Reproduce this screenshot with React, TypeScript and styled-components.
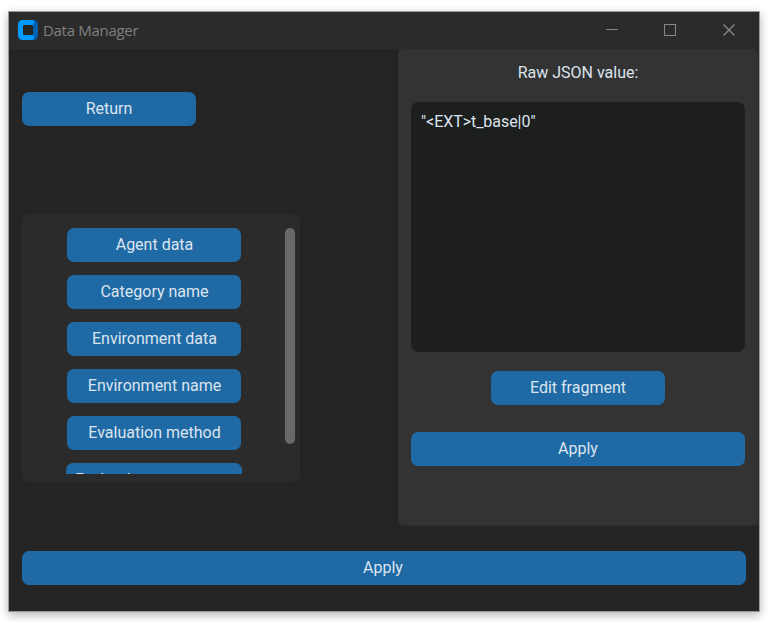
import React from "react";
import styled, { createGlobalStyle } from "styled-components";

const Global = createGlobalStyle`
  * { box-sizing: border-box; }
  body { margin: 0; background: #fff; overflow: hidden; }
`;

const Desktop = styled.div`
  width: 768px;
  height: 622px;
  padding: 11px 8px 10px;
  overflow: hidden;
`;

const Window = styled.main`
  width: 752px;
  height: 601px;
  border: 1px solid #999;
  background: #242424;
  box-shadow: 0 3px 9px rgba(0, 0, 0, 0.3);
  color: #dce4ee;
  font: 16px/20px Roboto, sans-serif;
`;

const TitleBar = styled.header`
  height: 37px;
  padding: 0 0 1px 9px;
  display: flex;
  align-items: center;
  background: #2b2b2b;
`;

const Title = styled.h1`
  flex: 1;
  margin: 0 0 0 5px;
  color: #808080;
  font: 400 15px/20px "Open Sans", "Noto Sans", sans-serif;
  letter-spacing: -0.3px;
`;

const WindowControls = styled.div`
  display: flex;
  gap: 46px;
  margin-right: 25px;

  svg { display: block; }
  svg:last-child { margin-left: 1px; margin-right: -1px; }
`;

const Content = styled.div`
  height: 477px;
  display: flex;
  justify-content: space-between;
`;

const Sidebar = styled.section`
  width: 291px;
  padding: 43px 0 0 13px;
`;

const Button = styled.button<{ $width?: number }>`
  display: block;
  flex: none;
  width: ${(p) => (p.$width ? `${p.$width}px` : "100%")};
  height: 34px;
  padding: 0;
  border: 0;
  border-radius: 7px;
  background: #1f6aa5;
  color: #dce4ee;
  font: inherit;
  text-align: center;
  white-space: nowrap;
`;

const ListFrame = styled.div`
  width: 278px;
  height: 268px;
  margin-top: 88px;
  padding: 14px 5px 8px 6px;
  display: flex;
  justify-content: space-between;
  border-radius: 8px;
  background: #2b2b2b;
`;

const ButtonList = styled.div`
  width: 252px;
  height: 246px;
  display: flex;
  flex-direction: column;
  align-items: center;
  gap: 13px;
  overflow: hidden;

  button { padding-left: 1px; }
`;

const ScrollThumb = styled.div`
  width: 10px;
  height: 216px;
  border-radius: 5px;
  background: #696969;
`;

const PanelBack = styled.div`
  width: 361px;
  background: #2b2b2b;
`;

const Panel = styled.section`
  width: 360px;
  height: 476px;
  padding: 14px 13px 0;
  display: flex;
  flex-direction: column;
  align-items: center;
  border-radius: 7px;
  background: #333;
`;

const JsonBox = styled.pre`
  width: 334px;
  height: 250px;
  margin: 19px 0;
  padding: 10px;
  border-radius: 8px;
  background: #1d1e1e;
  font: inherit;
  letter-spacing: -0.05px;
`;

const PanelAction = styled.div`
  width: 100%;
  margin-top: 27px;
`;

const Footer = styled.footer`
  padding: 25px 13px 0;

  button { padding-right: 2px; }
`;

const items = [
  { label: "Agent data", width: 174 },
  { label: "Category name", width: 174 },
  { label: "Environment data", width: 174 },
  { label: "Environment name", width: 174 },
  { label: "Evaluation method", width: 174 },
  { label: "Evaluation parameters", width: 176 },
];

const AppLogo = () => (
  <svg width="20" height="20" viewBox="0 0 20 20">
    <path d="M14 0h1q5 0 5 5v10q0 5-5 5h-1z" fill="#0061b0" />
    <path
      d="M5 0h9q2 0 2 2v1q0 2-2 2H7Q5 5 5 7v6q0 2 2 2h7q2 0 2 2v1q0 2-2 2H5q-5 0-5-5V5q0-5 5-5z"
      fill="#009aff"
    />
    <rect x="5" y="5" width="10" height="10" rx="1.5" fill="#242424" />
  </svg>
);

export default function App() {
  return (
    <Desktop>
      <Global />
      <Window>
        <TitleBar>
          <AppLogo />
          <Title>Data Manager</Title>
          <WindowControls>
            <svg width="12" height="12">
              <path d="M0 5.5h12" stroke="#888" />
            </svg>
            <svg width="12" height="12">
              <rect x="0.5" y="0.5" width="11" height="11" fill="none" stroke="#888" />
            </svg>
            <svg width="12" height="12">
              <path d="M.5.5l11 11M11.5.5l-11 11" stroke="#8c8c8c" strokeWidth="1.2" />
            </svg>
          </WindowControls>
        </TitleBar>
        <Content>
          <Sidebar>
            <Button $width={174}>Return</Button>
            <ListFrame>
              <ButtonList>
                {items.map((item) => (
                  <Button key={item.label} $width={item.width}>
                    {item.label}
                  </Button>
                ))}
              </ButtonList>
              <ScrollThumb />
            </ListFrame>
          </Sidebar>
          <PanelBack>
            <Panel>
              <span>Raw JSON value:</span>
              <JsonBox>{'"<EXT>t_base|0"'}</JsonBox>
              <Button $width={174}>Edit fragment</Button>
              <PanelAction>
                <Button>Apply</Button>
              </PanelAction>
            </Panel>
          </PanelBack>
        </Content>
        <Footer>
          <Button>Apply</Button>
        </Footer>
      </Window>
    </Desktop>
  );
}
